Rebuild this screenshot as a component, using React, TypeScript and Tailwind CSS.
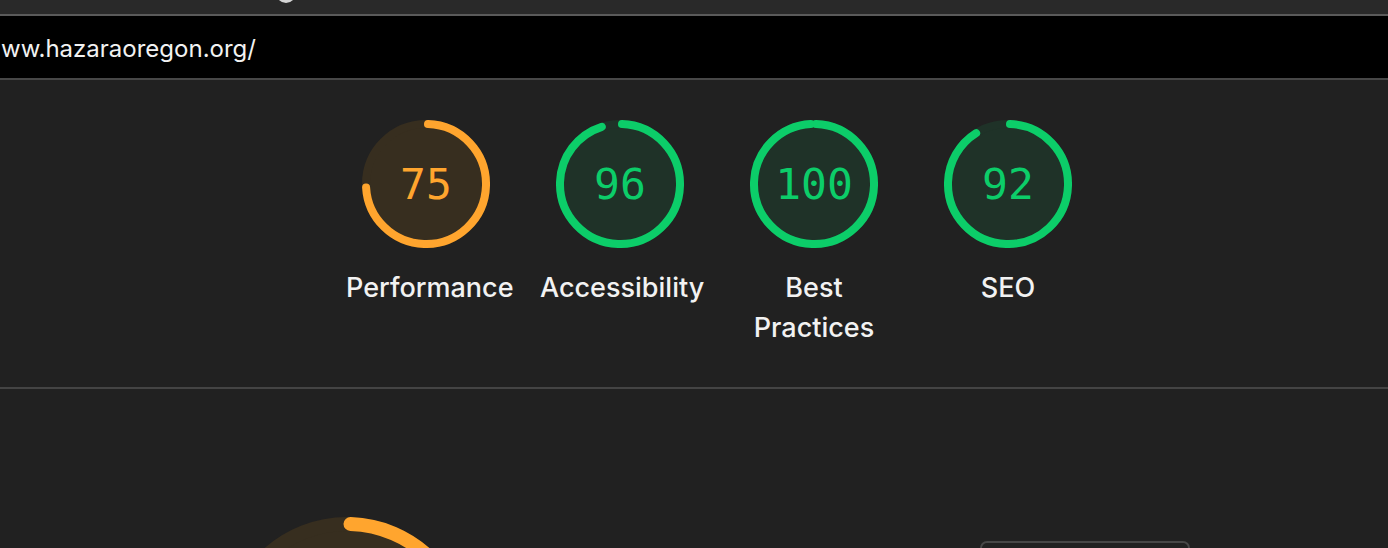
import React from 'react';

type GaugeProps = {
  score: number;
  size: number;
  stroke: number;
  color: string;
  fill: string;
};

const Ring: React.FC<GaugeProps> = ({ score, size, stroke, color, fill }) => {
  const r = (size - stroke) / 2;
  const c = 2 * Math.PI * r;
  const gap = 0.75 * stroke;
  const arc = Math.max(score * c - gap, 0);
  const rot = (360 * (0.25 * stroke)) / c - 90;
  return (
    <svg width={size} height={size} viewBox={`0 0 ${size} ${size}`} className="block">
      <circle cx={size / 2} cy={size / 2} r={r} fill={fill} stroke={fill} strokeWidth={stroke} />
      <circle
        cx={size / 2}
        cy={size / 2}
        r={r}
        fill="none"
        stroke={color}
        strokeWidth={stroke}
        strokeLinecap="round"
        strokeDasharray={`${arc} ${c}`}
        transform={`rotate(${rot} ${size / 2} ${size / 2})`}
      />
    </svg>
  );
};

const ORANGE = '#ffa52e';
const ORANGE_BG = '#372e1f';
const GREEN = '#0ccd69';
const GREEN_BG = '#1f3228';

const gauges = [
  { score: 75, label: 'Performance', orange: true },
  { score: 96, label: 'Accessibility', orange: false },
  { score: 100, label: 'Best Practices', orange: false },
  { score: 92, label: 'SEO', orange: false },
];

export default function App() {
  return (
    <div className="w-[1388px] h-[548px] overflow-hidden bg-[#212121] font-['Inter','Liberation_Sans',sans-serif]">
      {/* browser chrome strip */}
      <div className="h-[14px] bg-[#292929] relative overflow-hidden">
        <div className="absolute left-[276px] top-[-17px] w-[20px] h-[20px] rounded-full bg-[#d4d4d4]" />
      </div>
      <div className="h-[2px] bg-[#5a5a5a]" />
      <div className="h-[62px] bg-black flex items-center">
        <span className="text-[24px] text-[#f2f2f2] pl-px pt-[3px] leading-none">ww.hazaraoregon.org/</span>
      </div>
      <div className="h-[2px] bg-[#474747]" />

      {/* score summary */}
      <div className="flex justify-center pl-[46px] pt-[40px] pb-[39px]">
        {gauges.map(g => (
          <div key={g.label} className="w-[194px] flex flex-col items-center">
            <div className="relative w-[128px] h-[128px]">
              <Ring
                score={g.score / 100}
                size={128}
                stroke={8}
                color={g.orange ? ORANGE : GREEN}
                fill={g.orange ? ORANGE_BG : GREEN_BG}
              />
              <div
                className={`absolute inset-0 flex items-center justify-center font-['DejaVu_Sans_Mono','Liberation_Mono',monospace] text-[43px] ${
                  g.orange ? 'text-[#ffa52e]' : 'text-[#0ccd69]'
                }`}
              >
                {g.score}
              </div>
            </div>
            <div className="mt-[20px] w-[160px] text-center text-[27px] font-medium leading-[40px] text-[#f2f2f2]">
              {g.label}
            </div>
          </div>
        ))}
      </div>
      <div className="h-[2px] bg-[#444444]" />

      {/* performance section */}
      <div className="flex items-start">
        <div className="ml-[222px] mt-[128px] w-[250px] h-[250px]">
          <Ring score={0.75} size={250} stroke={14} color={ORANGE} fill={ORANGE_BG} />
        </div>
        <div className="ml-[508px] mt-[152px] w-[210px] h-[40px] rounded-t-[7px] border-2 border-[#474747]" />
      </div>
    </div>
  );
}
